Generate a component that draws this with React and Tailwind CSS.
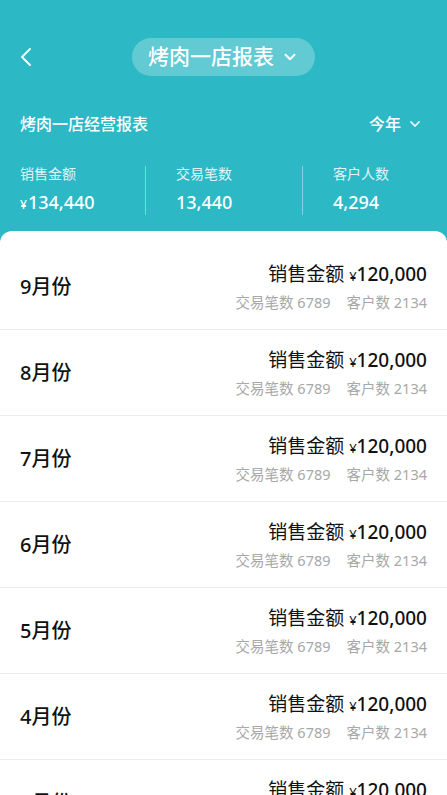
import { ChevronLeft, ChevronDown } from "lucide-react"

const months = ["9月份", "8月份", "7月份", "6月份", "5月份", "4月份", "3月份"]

function Stat({ label, value, yen, className }) {
  return (
    <div className={className}>
      <div className="text-[14px] leading-5 text-white/85">{label}</div>
      <div className="mt-[6px] text-[18px] leading-6 font-medium text-white">
        {yen && <span className="text-[12px] mr-[1px]">¥</span>}
        {value}
      </div>
    </div>
  )
}

function App() {
  return (
    <div
      className="min-h-screen bg-[#2cb8c4]"
      style={{ fontFamily: '"Noto Sans", "Noto Sans CJK SC", sans-serif' }}
    >
      <div className="relative flex h-[76px] items-end justify-center">
        <ChevronLeft className="absolute left-[10px] top-[41px] text-white" size={32} strokeWidth={1.4} />
        <div className="flex h-[38px] items-center gap-[7px] rounded-full bg-white/25 px-[16px]">
          <span className="text-[21px] font-medium text-white">烤肉一店报表</span>
          <ChevronDown className="text-white" size={18} strokeWidth={2.5} />
        </div>
      </div>

      <div className="mt-[36px] flex items-center justify-between pl-[20px] pr-[24px]">
        <span className="text-[16px] font-medium text-white">烤肉一店经营报表</span>
        <span className="flex items-center gap-[6px] text-[16px] font-medium text-white">
          今年
          <ChevronDown size={16} strokeWidth={2.5} />
        </span>
      </div>

      <div className="mt-[28px] flex items-stretch pl-[20px]">
        <Stat label="销售金额" value="134,440" yen className="w-[125px]" />
        <div className="my-[2px] w-px bg-white/40" />
        <Stat label="交易笔数" value="13,440" className="w-[156px] pl-[30px]" />
        <div className="my-[2px] w-px bg-white/40" />
        <Stat label="客户人数" value="4,294" className="pl-[30px]" />
      </div>

      <div className="mt-[14px] rounded-t-[12px] bg-white pt-[13px]">
        {months.map((m) => (
          <div
            key={m}
            className="flex h-[86px] items-center justify-between border-b border-[#ececec] px-[20px]"
          >
            <span className="text-[20px] font-medium text-[#111]">{m}</span>
            <div className="flex flex-col items-end">
              <div className="text-[19px] leading-6 text-[#111]">
                销售金额 <span className="text-[13px]">¥</span>
                <span className="font-medium">120,000</span>
              </div>
              <div className="mt-[4px] text-[14.5px] leading-5 text-[#a8a8a8]">
                交易笔数 6789<span className="ml-[16px]">客户数 2134</span>
              </div>
            </div>
          </div>
        ))}
      </div>
    </div>
  )
}

export default App
